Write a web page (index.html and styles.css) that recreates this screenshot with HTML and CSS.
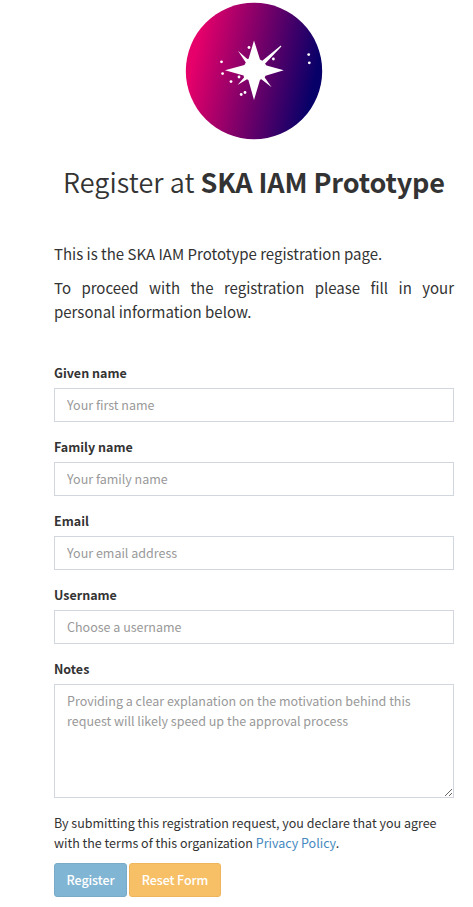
FILE: index.html
```html
<!DOCTYPE html>
<html lang="en">
<head>
<meta charset="utf-8">
<title>Register at SKA IAM Prototype</title>
<link rel="stylesheet" href="styles.css">
</head>
<body>
<main class="page">
  <svg class="logo" viewBox="0 0 138 138" aria-hidden="true">
    <defs>
      <linearGradient id="sky" gradientUnits="userSpaceOnUse" x1="9" y1="56" x2="129" y2="82">
        <stop offset="0" stop-color="#e6006a"/>
        <stop offset="1" stop-color="#070068"/>
      </linearGradient>
    </defs>
    <circle cx="69" cy="69" r="68.2" fill="url(#sky)"/>
    <g fill="#fff">
      <path d="M69 38.6 L75 57.5 L77.3 58.8 L95.8 43.6 L96.4 44.4 L80 61.8 L81.5 63.6 L98.8 68.3 L80.5 73.8 L79.7 75.4 L86.6 85.3 L76.4 77.2 L75 77.8 L69 98 L63.4 78 L62 77.2 L52.5 83 L59 75.4 L58.6 73.6 L40 68.3 L59.4 63 L60.8 60.6 L52.9 48.7 L62.3 57 L63.6 56.8 Z"/>
      <circle cx="64" cy="45.5" r="1.4"/>
      <circle cx="36.5" cy="59.8" r="1.4"/>
      <circle cx="37.6" cy="71.6" r="1.4"/>
      <circle cx="46" cy="79.6" r="1.4"/>
      <circle cx="54" cy="75" r="1.4"/>
      <circle cx="56.2" cy="92.5" r="1.4"/>
      <circle cx="60" cy="90.5" r="1.4"/>
      <circle cx="88.4" cy="57" r="1.4"/>
      <circle cx="123.7" cy="52.6" r="1.4"/>
      <circle cx="124.3" cy="60.8" r="1.4"/>
    </g>
  </svg>
  <h1 class="title">Register at <strong>SKA IAM Prototype</strong></h1>
  <div class="intro">
    <p>This is the SKA IAM Prototype registration page.</p>
    <p>To proceed with the registration please fill in your personal information below.</p>
  </div>
  <form class="form">
    <div class="field"><label for="given">Given name</label><input id="given" type="text" placeholder="Your first name"></div>
    <div class="field"><label for="family">Family name</label><input id="family" type="text" placeholder="Your family name"></div>
    <div class="field"><label for="email">Email</label><input id="email" type="text" placeholder="Your email address"></div>
    <div class="field"><label for="username">Username</label><input id="username" type="text" placeholder="Choose a username"></div>
    <div class="field"><label for="notes">Notes</label><textarea id="notes" placeholder="Providing a clear explanation on the motivation behind this request will likely speed up the approval process"></textarea></div>
    <p class="terms">By submitting this registration request, you declare that you agree with the terms of this organization <a href="#">Privacy Policy</a>.</p>
    <div class="actions">
      <button class="btn btn-primary" type="button">Register</button>
      <button class="btn btn-warning" type="button">Reset Form</button>
    </div>
  </form>
</main>
</body>
</html>
```
FILE: styles.css
```css
* { box-sizing: border-box; }
body {
  margin: 0;
  background: #fff;
  color: #333;
  font: 12.5px/20px "Noto Sans CJK SC", "Noto Sans", sans-serif;
  overflow: hidden;
}
.page { width: 400px; margin: 2px 0 0 54px; }
.logo { display: block; width: 138px; height: 138px; margin: 0 auto; }
.title {
  margin: 25px 0 0;
  font-size: 27px;
  line-height: 33px;
  font-weight: 350;
  letter-spacing: 0.06px;
  text-align: center;
  white-space: nowrap;
}
.title strong { font-weight: 700; letter-spacing: -0.12px; }
.intro { margin-top: 44px; font-size: 15px; line-height: 24px; text-align: justify; }
.intro p { margin: 0 0 10px; }
.form { margin-top: 39px; }
.field { display: flex; flex-direction: column; margin-bottom: 15px; }
.field label { margin-bottom: 5px; font-weight: 700; }
.field input,
.field textarea {
  display: block;
  width: 100%;
  height: 34px;
  margin: 0;
  padding: 5px 12px 7px;
  border: 1px solid #d2d6de;
  border-radius: 0;
  background: #fff;
  font: inherit;
}
.field textarea { height: 114px; padding: 6px 12px; resize: vertical; }
.field ::placeholder { color: #999; opacity: 1; }
.terms { margin: 0 0 10px; }
.terms a { color: #4589c0; text-decoration: none; }
.actions { display: flex; gap: 2px; }
.btn {
  height: 34px;
  padding: 0;
  border: 1px solid;
  border-radius: 3px;
  color: #fff;
  font: inherit;
  font-weight: 500;
  letter-spacing: -0.08px;
  white-space: nowrap;
}
.btn-primary { width: 73px; background: #81b5d4; border-color: #79aac8; }
.btn-warning { width: 92px; background: #f7c067; border-color: #efb55a; }
```
